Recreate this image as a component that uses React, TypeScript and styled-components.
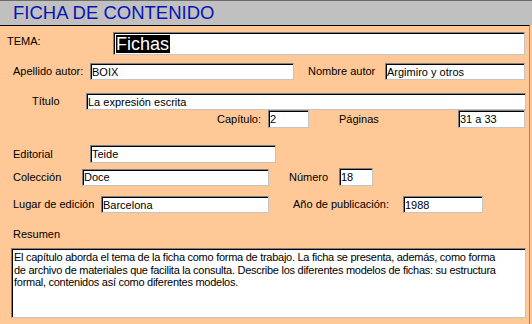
import React from 'react'
import styled, { createGlobalStyle } from 'styled-components'

const GlobalStyle = createGlobalStyle`
	html, body {
		margin: 0;
		padding: 0;
		background: #ffc896;
	}

	body {
		font-family: "Liberation Sans", Arial, sans-serif;
		font-size: 11px;
		color: #000;
	}
`

const FormWindow = styled.div`
	width: 532px;
	height: 324px;
	background: #ffc896;
	display: flex;
	flex-direction: column;
	overflow: hidden;
`

const Header = styled.div`
	height: 24px;
	background: #c0c0c0;
	border-top: 1px solid #6c6c6c;
`

const Title = styled.h1`
	margin: 0;
	padding-left: 13px;
	font-family: "Liberation Sans", Arial, sans-serif;
	font-size: 18.5px;
	font-weight: normal;
	line-height: 24px;
	color: #0a14b4;
	white-space: nowrap;
`

const Detail = styled.div`
	width: 529px;
	flex: 1;
	border-top: 1px solid #000;
	border-right: 1px solid #9a8a7a;
	display: flex;
	flex-direction: column;
`

const Row = styled.div<{ $top: number; $left: number }>`
	display: flex;
	align-items: center;
	margin-top: ${p => p.$top}px;
	padding-left: ${p => p.$left}px;
`

const Label = styled.span<{ $w?: number; $gap?: number; $raise?: boolean }>`
	flex: none;
	width: ${p => (p.$w ? `${p.$w}px` : 'auto')};
	margin-left: ${p => p.$gap || 0}px;
	line-height: 13px;
	white-space: nowrap;
	align-self: ${p => (p.$raise ? 'flex-start' : 'center')};
	margin-top: ${p => (p.$raise ? '3px' : '0')};
`

const Box = styled.div<{ $w: number; $h: number }>`
	flex: none;
	box-sizing: border-box;
	width: ${p => p.$w}px;
	height: ${p => p.$h}px;
	background: #fff;
	border: 1px solid;
	border-color: #808080 #c4c4c4 #c4c4c4 #808080;
	box-shadow: inset 1px 1px 0 #000;
	display: flex;
	align-items: center;
	padding: 1px 0 0 1px;
	line-height: 13px;
	white-space: nowrap;
	overflow: hidden;
`

const BigValue = styled.span`
	margin-left: 1px;
	font-size: 18px;
	line-height: 18px;
	background: #000;
	color: #fff;
	padding: 0 1px 0 0;
`

const Memo = styled.div`
	box-sizing: border-box;
	width: 515px;
	height: 70px;
	margin: 7px 0 0 11px;
	background: #fff;
	border: 1px solid;
	border-color: #808080 #c4c4c4 #c4c4c4 #808080;
	box-shadow: inset 1px 1px 0 #000;
	padding: 2px 0 0 2px;
	line-height: 12.5px;
	letter-spacing: -0.27px;
	white-space: nowrap;
	overflow: hidden;
`

export default function App() {
	return (
		<>
			<GlobalStyle />
			<FormWindow>
				<Header>
					<Title>FICHA DE CONTENIDO</Title>
				</Header>
				<Detail>
					<Row $top={6} $left={7}>
						<Label $w={106} $raise>TEMA:</Label>
						<Box $w={412} $h={23}>
							<BigValue>Fichas</BigValue>
						</Box>
					</Row>

					<Row $top={8} $left={13}>
						<Label $w={77}>Apellido autor:</Label>
						<Box $w={204} $h={17}>BOIX</Box>
						<Label $w={77} $gap={14}>Nombre autor</Label>
						<Box $w={140} $h={17}>Argimiro y otros</Box>
					</Row>

					<Row $top={13} $left={32}>
						<Label $w={54}>Título</Label>
						<Box $w={440} $h={17}>La expresión escrita</Box>
					</Row>

					<Row $top={0} $left={217}>
						<Label $w={51}>Capítulo:</Label>
						<Box $w={41} $h={18}>2</Box>
						<Label $w={119} $gap={30}>Páginas</Label>
						<Box $w={67} $h={18}>31 a 33</Box>
					</Row>

					<Row $top={17} $left={13}>
						<Label $w={77}>Editorial</Label>
						<Box $w={186} $h={18}>Teide</Box>
					</Row>

					<Row $top={5} $left={13}>
						<Label $w={69}>Colección</Label>
						<Box $w={187} $h={17}>Doce</Box>
						<Label $w={50} $gap={20}>Número</Label>
						<Box $w={34} $h={18}>18</Box>
					</Row>

					<Row $top={10} $left={13}>
						<Label $w={88}>Lugar de edición</Label>
						<Box $w={168} $h={17}>Barcelona</Box>
						<Label $w={110} $gap={24}>Año de publicación:</Label>
						<Box $w={80} $h={17}>1988</Box>
					</Row>

					<Row $top={15} $left={13}>
						<Label>Resumen</Label>
					</Row>

					<Memo>
						El capítulo aborda el tema de la ficha como forma de trabajo. La ficha se presenta, además, como forma
						<br />
						de archivo de materiales que facilita la consulta. Describe los diferentes modelos de fichas: su estructura
						<br />
						formal, contenidos así como diferentes modelos.
					</Memo>
				</Detail>
			</FormWindow>
		</>
	)
}
